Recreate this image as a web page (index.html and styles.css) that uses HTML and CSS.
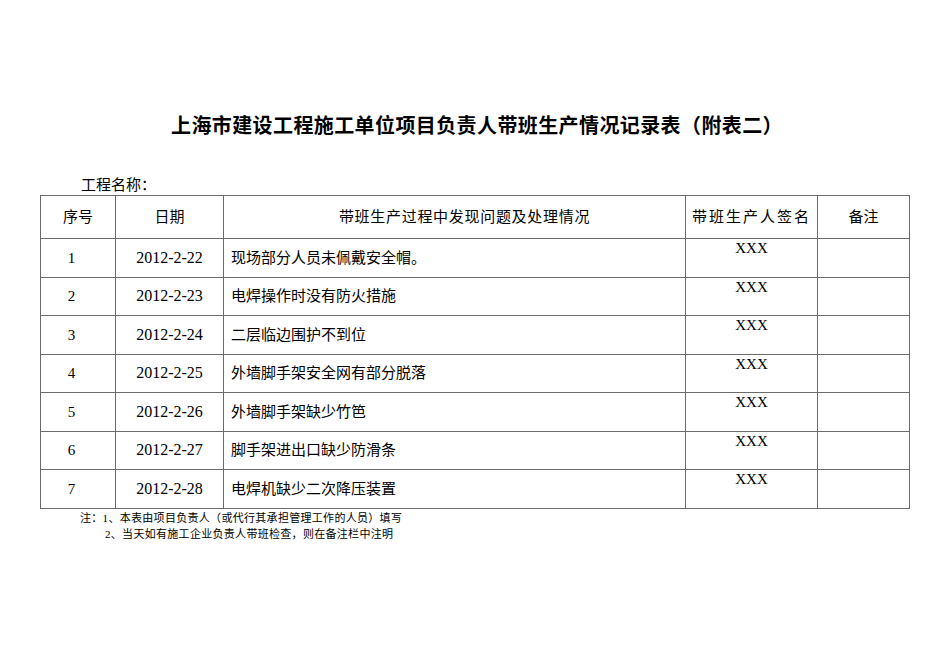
FILE: index.html
```html
<!DOCTYPE html>
<html lang="zh">
<head>
<meta charset="utf-8">
<link rel="stylesheet" href="styles.css">
</head>
<body>
<div class="page">
  <h1 class="title">上海市建设工程施工单位项目负责人带班生产情况记录表（附表二）</h1>
  <div class="project">工程名称：</div>
  <table class="log">
    <colgroup>
      <col class="c1"><col class="c2"><col class="c3"><col class="c4"><col class="c5">
    </colgroup>
    <thead>
      <tr><th>序号</th><th>日期</th><th class="wide">带班生产过程中发现问题及处理情况</th><th class="signh">带班生产人签名</th><th>备注</th></tr>
    </thead>
    <tbody>
      <tr><td class="num">1</td><td class="date">2012-2-22</td><td class="issue">现场部分人员未佩戴安全帽。</td><td class="sign">XXX</td><td></td></tr>
      <tr><td class="num">2</td><td class="date">2012-2-23</td><td class="issue">电焊操作时没有防火措施</td><td class="sign">XXX</td><td></td></tr>
      <tr><td class="num">3</td><td class="date">2012-2-24</td><td class="issue">二层临边围护不到位</td><td class="sign">XXX</td><td></td></tr>
      <tr><td class="num">4</td><td class="date">2012-2-25</td><td class="issue">外墙脚手架安全网有部分脱落</td><td class="sign">XXX</td><td></td></tr>
      <tr><td class="num">5</td><td class="date">2012-2-26</td><td class="issue">外墙脚手架缺少竹笆</td><td class="sign">XXX</td><td></td></tr>
      <tr><td class="num">6</td><td class="date">2012-2-27</td><td class="issue">脚手架进出口缺少防滑条</td><td class="sign">XXX</td><td></td></tr>
      <tr><td class="num">7</td><td class="date">2012-2-28</td><td class="issue">电焊机缺少二次降压装置</td><td class="sign">XXX</td><td></td></tr>
    </tbody>
  </table>
  <div class="notes">
    <p>注：1、本表由项目负责人（或代行其承担管理工作的人员）填写</p>
    <p class="indent">2、当天如有施工企业负责人带班检查，则在备注栏中注明</p>
  </div>
</div>
</body>
</html>
```
FILE: styles.css
```css
html, body {
  margin: 0;
  padding: 0;
  background: #fff;
}
body {
  font-family: "Liberation Serif", "Noto Sans CJK SC", serif;
  color: #000;
}
.page {
  width: 950px;
  height: 672px;
  padding-top: 112px;
  box-sizing: border-box;
}
.title {
  margin: 0;
  padding-left: 4px;
  text-align: center;
  font-size: 20px;
  line-height: 28px;
  font-weight: bold;
  font-family: "Liberation Sans", "Noto Sans CJK SC", sans-serif;
  letter-spacing: 0.4px;
}
.project {
  margin: 36px 0 0 81px;
  font-size: 15px;
  line-height: 19px;
}
.log {
  margin-left: 40px;
  width: 869px;
  border-collapse: collapse;
  table-layout: fixed;
  font-size: 15px;
  line-height: 18px;
}
.c1 { width: 75px; }
.c2 { width: 108px; }
.c3 { width: 462px; }
.c4 { width: 132px; }
.c5 { width: 92px; }
.log th, .log td {
  border: 1px solid #6b6b6b;
  padding: 0;
}
.log th {
  height: 42px;
  font-weight: normal;
  text-align: center;
  vertical-align: middle;
}
.log th.wide {
  letter-spacing: 0.7px;
  padding-left: 20px;
}
.log th.signh { letter-spacing: 2px; }
.log td {
  height: 37.5px;
  vertical-align: middle;
}
.log td.num {
  text-align: center;
  padding-right: 13px;
}
.log td.date {
  text-align: center;
  font-size: 16px;
}
.log td.issue {
  padding-left: 7px;
}
.log td.sign {
  text-align: center;
  vertical-align: top;
  padding-top: 0;
}
.notes {
  margin: 1px 0 0 80px;
  font-size: 11px;
  line-height: 16px;
  letter-spacing: 0.3px;
}
.notes p {
  margin: 0;
}
.notes .indent {
  padding-left: 25px;
}
```
